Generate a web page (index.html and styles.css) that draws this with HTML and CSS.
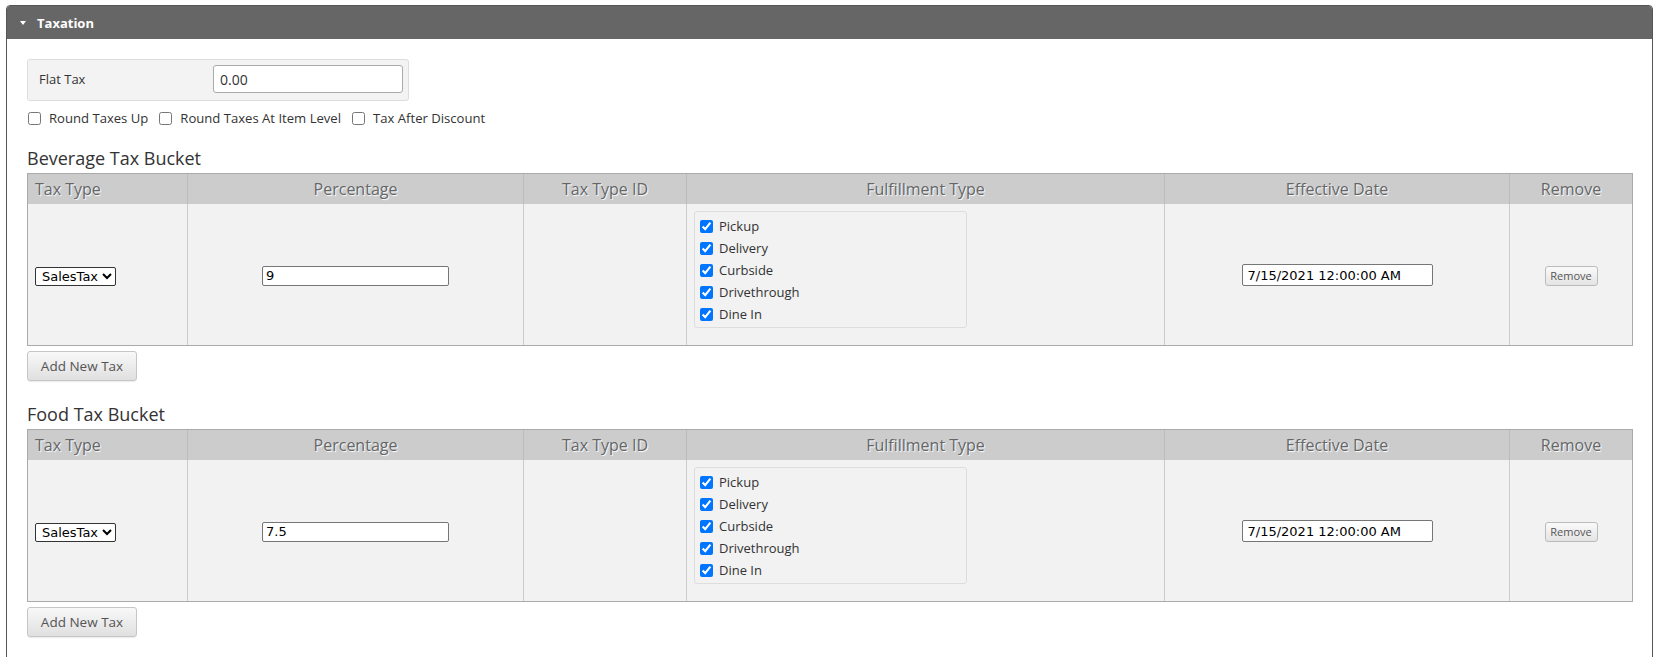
FILE: index.html
```html
<!DOCTYPE html>
<html lang="en">
<head>
    <meta charset="UTF-8">
    <meta name="viewport" content="width=device-width, initial-scale=1.0">
    <title>Taxation</title>
    <link rel="stylesheet" href="styles.css">
</head>
<body>
    <div class="panel">
        <div class="panel-header">
            <span class="caret"></span>
            <span class="panel-title">Taxation</span>
        </div>
        <div class="panel-body">
            <div class="flat-tax">
                <label class="flat-tax-label" for="flatTax">Flat Tax</label>
                <input type="text" id="flatTax" class="flat-tax-input" value="0.00">
            </div>
            <div class="options">
                <label class="option"><input type="checkbox">Round Taxes Up</label>
                <label class="option"><input type="checkbox">Round Taxes At Item Level</label>
                <label class="option"><input type="checkbox">Tax After Discount</label>
            </div>

            <h3 class="bucket-title">Beverage Tax Bucket</h3>
            <table class="tax-table">
                <colgroup>
                    <col class="col-type">
                    <col class="col-pct">
                    <col class="col-id">
                    <col class="col-ful">
                    <col class="col-date">
                    <col class="col-remove">
                </colgroup>
                <thead>
                    <tr>
                        <th class="left">Tax Type</th>
                        <th>Percentage</th>
                        <th>Tax Type ID</th>
                        <th>Fulfillment Type</th>
                        <th>Effective Date</th>
                        <th>Remove</th>
                    </tr>
                </thead>
                <tbody>
                    <tr>
                        <td><select class="type-select"><option>SalesTax</option></select></td>
                        <td class="center"><input type="text" class="pct-input" value="9"></td>
                        <td></td>
                        <td class="fulfillment-cell">
                            <div class="fulfillment-box">
                                <label class="ful-row"><input type="checkbox" checked>Pickup</label>
                                <label class="ful-row"><input type="checkbox" checked>Delivery</label>
                                <label class="ful-row"><input type="checkbox" checked>Curbside</label>
                                <label class="ful-row"><input type="checkbox" checked>Drivethrough</label>
                                <label class="ful-row"><input type="checkbox" checked>Dine In</label>
                            </div>
                        </td>
                        <td class="center"><input type="text" class="date-input" value="7/15/2021 12:00:00 AM"></td>
                        <td class="center"><button class="remove-btn">Remove</button></td>
                    </tr>
                </tbody>
            </table>
            <button class="add-btn">Add New Tax</button>

            <h3 class="bucket-title food">Food Tax Bucket</h3>
            <table class="tax-table">
                <colgroup>
                    <col class="col-type">
                    <col class="col-pct">
                    <col class="col-id">
                    <col class="col-ful">
                    <col class="col-date">
                    <col class="col-remove">
                </colgroup>
                <thead>
                    <tr>
                        <th class="left">Tax Type</th>
                        <th>Percentage</th>
                        <th>Tax Type ID</th>
                        <th>Fulfillment Type</th>
                        <th>Effective Date</th>
                        <th>Remove</th>
                    </tr>
                </thead>
                <tbody>
                    <tr>
                        <td><select class="type-select"><option>SalesTax</option></select></td>
                        <td class="center"><input type="text" class="pct-input" value="7.5"></td>
                        <td></td>
                        <td class="fulfillment-cell">
                            <div class="fulfillment-box">
                                <label class="ful-row"><input type="checkbox" checked>Pickup</label>
                                <label class="ful-row"><input type="checkbox" checked>Delivery</label>
                                <label class="ful-row"><input type="checkbox" checked>Curbside</label>
                                <label class="ful-row"><input type="checkbox" checked>Drivethrough</label>
                                <label class="ful-row"><input type="checkbox" checked>Dine In</label>
                            </div>
                        </td>
                        <td class="center"><input type="text" class="date-input" value="7/15/2021 12:00:00 AM"></td>
                        <td class="center"><button class="remove-btn">Remove</button></td>
                    </tr>
                </tbody>
            </table>
            <button class="add-btn">Add New Tax</button>
        </div>
    </div>
</body>
</html>
```

FILE: styles.css
```css
body {
    margin: 5px 7px 0 6px;
    font-family: "Open Sans", "Liberation Sans", sans-serif;
    color: #333;
    background-color: #fff;
}

.panel {
    border: 1px solid #555;
    border-radius: 4px 4px 0 0;
}

.panel-header {
    display: flex;
    align-items: center;
    height: 33px;
    padding-left: 13px;
    background-color: #666;
    border-radius: 3px 3px 0 0;
    color: #fff;
    font-size: 13px;
    font-weight: 700;
}

.caret {
    width: 0;
    height: 0;
    border-left: 3px solid transparent;
    border-right: 3px solid transparent;
    border-top: 4px solid #fff;
    margin-right: 11px;
}

.panel-body {
    padding: 20px 20px 30px;
}

/* flat tax */
.flat-tax {
    display: flex;
    align-items: center;
    box-sizing: border-box;
    width: 382px;
    padding: 5px 5px 7px 11px;
    background-color: #f3f3f3;
    border: 1px solid #ddd;
    border-radius: 3px;
}

.flat-tax-label {
    flex: 0 0 174px;
    font-size: 13px;
}

.flat-tax-input {
    box-sizing: border-box;
    width: 190px;
    height: 28px;
    padding: 0 6px;
    border: 1px solid #aaa;
    border-radius: 3px;
    font-family: "Open Sans", sans-serif;
    font-size: 14px;
    color: #333;
    outline: none;
}

.options {
    display: flex;
    align-items: center;
    height: 20px;
    margin-top: 7px;
    font-size: 13.1px;
}

.option {
    display: flex;
    align-items: center;
    margin-right: 10px;
}

.option input {
    width: 13px;
    height: 13px;
    margin: 0 8px 0 1px;
}

.bucket-title {
    margin: 18px 0 3px;
    font-size: 18px;
    font-weight: 400;
    line-height: 24px;
}

.bucket-title.food {
    margin-top: 21px;
}

/* tax tables */
.tax-table {
    width: 100%;
    table-layout: fixed;
    border-collapse: separate;
    border-spacing: 0;
    border: 1px solid #aaa;
}

.col-type { width: 159px; }
.col-pct { width: 336px; }
.col-id { width: 163px; }
.col-ful { width: 478px; }
.col-date { width: 345px; }
.col-remove { width: 123px; }

.tax-table th {
    height: 30px;
    padding: 0 7px;
    background-color: #ccc;
    color: #666;
    font-size: 16px;
    font-weight: 400;
    line-height: 30px;
    text-align: center;
    text-shadow: 1px 1px 1px #fff;
    white-space: nowrap;
}

.tax-table th.left {
    text-align: left;
}

.tax-table th + th {
    border-left: 1px solid #bbb;
}

.tax-table td {
    padding: 0 7px;
    background-color: #f2f2f2;
    vertical-align: middle;
}

.tax-table td + td {
    border-left: 1px solid #ccc;
}

.tax-table td.center {
    text-align: center;
}

.type-select {
    width: 81px;
    height: 19px;
    padding: 0 0 0 2px;
    border: 1px solid #333;
    border-radius: 2px;
    background-color: #fff;
    font-family: "DejaVu Sans", sans-serif;
    font-size: 13px;
    color: #000;
}

.pct-input,
.date-input {
    box-sizing: border-box;
    height: 20px;
    padding: 0 3px;
    border: 1px solid #767676;
    border-radius: 2px;
    font-family: "DejaVu Sans", sans-serif;
    font-size: 13px;
    color: #000;
    outline: none;
}

.pct-input {
    width: 187px;
}

.date-input {
    width: 191px;
    height: 22px;
    padding: 0 5px;
}

.tax-table td.fulfillment-cell {
    padding: 7px 7px 17px;
    vertical-align: top;
}

.fulfillment-box {
    box-sizing: border-box;
    width: 273px;
    padding: 3px 5px 2px;
    border: 1px solid #ddd;
    border-radius: 3px;
}

.ful-row {
    display: flex;
    align-items: center;
    height: 22px;
    font-size: 13px;
}

.ful-row input {
    width: 13px;
    height: 13px;
    margin: 0 6px 0 0;
}

.remove-btn {
    width: 53px;
    height: 20px;
    padding: 0;
    border: 1px solid #bbb;
    border-radius: 3px;
    background: linear-gradient(to bottom, #fafafa, #e4e4e4);
    font-family: "Open Sans", sans-serif;
    font-size: 11px;
    color: #555;
    cursor: pointer;
}

.add-btn {
    display: block;
    width: 110px;
    height: 30px;
    margin-top: 5px;
    padding: 0;
    border: 1px solid #c6c6c6;
    border-radius: 3px;
    background: linear-gradient(to bottom, #f8f8f8, #e0e0e0);
    box-shadow: 0 1px 1px rgba(0, 0, 0, 0.08);
    font-family: "Open Sans", sans-serif;
    font-size: 13.5px;
    color: #555;
    cursor: pointer;
}
```
